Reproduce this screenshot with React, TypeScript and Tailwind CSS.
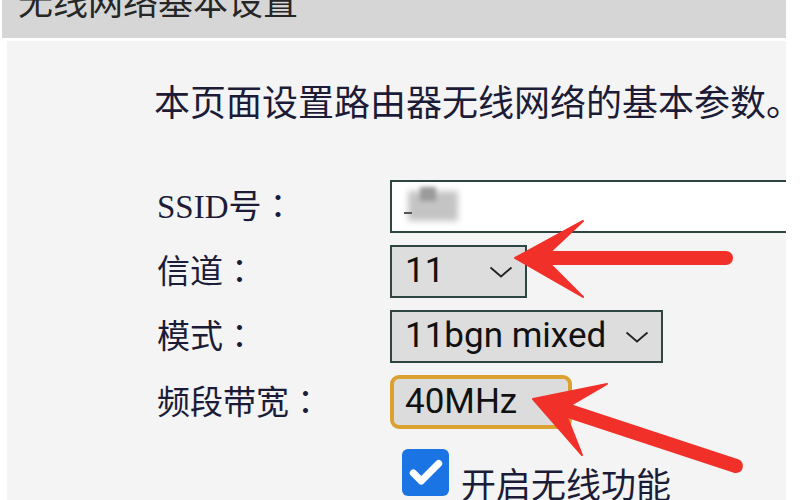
import { Check } from "lucide-react";

const rows = [
  { label: "信道", value: "11", width: "w-[137px]" },
  { label: "模式", value: "11bgn mixed", width: "w-[273px]" },
];

function Chevron() {
  return (
    <svg width="24" height="12" viewBox="0 0 24 12" className="shrink-0">
      <path d="M1.5 1.5 L12 10.5 L22.5 1.5" fill="none" stroke="#222" strokeWidth="1.8" />
    </svg>
  );
}

// full-width colon with centred dots, as in the screenshot
function Label({ text }: { text: string }) {
  return (
    <span className="w-[233px] shrink-0 whitespace-nowrap">
      {text}
      <span className="font-['Noto_Sans_CJK_TC',sans-serif]">：</span>
    </span>
  );
}

export default function App() {
  return (
    <div className="w-[800px] h-[500px] bg-white overflow-hidden relative">
      <div className="ml-[2px] w-[784px]">
        {/* title bar, cut at the top */}
        <div className="h-[38px] bg-[#d6d6d6] overflow-hidden px-[16px]">
          <div className="-mt-[18px] text-[35px] leading-[35px] text-[#262626] font-['Noto_Sans_CJK_SC',sans-serif]">
            无线网络基本设置
          </div>
        </div>

        <div className="ml-[5px] mt-[3px] h-[462px] bg-[#f4f4f4] overflow-hidden pl-[147px] pt-[41px] text-[#1c1c38]">
          <p className="text-[36px] leading-[36px] whitespace-nowrap font-['Noto_Sans_CJK_SC',sans-serif]">
            本页面设置路由器无线网络的基本参数。
          </p>

          <div className="mt-[62px] ml-[3px] flex flex-col gap-[12px] font-['Liberation_Serif','Noto_Sans_CJK_SC',serif] text-[33px]">
            <div className="flex items-center h-[53px]">
              <Label text="SSID号" />
              <div className="relative w-[420px] h-[53px] shrink-0 bg-white border-2 border-[#2d4642]">
                <div className="absolute left-[16px] top-[9px] w-[50px] h-[30px] bg-[#c4c4c4] blur-[3px]" />
                <div className="absolute left-[28px] top-[5px] w-[16px] h-[14px] bg-[#9a9a9a] blur-[2px]" />
                <div className="absolute left-[12px] top-[30px] w-[8px] h-[2px] bg-[#555]" />
              </div>
            </div>

            {rows.map((r) => (
              <div key={r.label} className="flex items-center h-[53px]">
                <Label text={r.label} />
                <div
                  className={`${r.width} h-[53px] shrink-0 bg-[#dddddd] border-2 border-[#2d4642] flex items-center justify-between pl-[13px] pr-[12px] font-['Roboto','Noto_Sans',sans-serif] text-[35px] text-[#111]`}
                >
                  <span>{r.value}</span>
                  <Chevron />
                </div>
              </div>
            ))}

            <div className="flex items-center h-[54px]">
              <Label text="频段带宽" />
              <div className="w-[182px] h-[54px] shrink-0 bg-[#dcdcdc] border-[4px] border-[#dba232] rounded-[9px] flex items-center pl-[11px] font-['Roboto','Noto_Sans',sans-serif] text-[35px] text-[#111]">
                40MHz
              </div>
            </div>

            <div className="flex items-start pl-[245px] pt-[8px]">
              <div className="w-[47px] h-[47px] rounded-[6px] bg-[#1b74e4] flex items-center justify-center">
                <Check size={38} strokeWidth={4.5} color="white" />
              </div>
              <span className="ml-[12px] mt-[14px] text-[35px] leading-[40px] font-['Noto_Sans_CJK_SC',sans-serif]">
                开启无线功能
              </span>
            </div>
          </div>
        </div>
      </div>

      {/* red annotation arrows */}
      <svg className="absolute inset-0 pointer-events-none" width="800" height="500" viewBox="0 0 800 500">
        <g fill="#f2302a" stroke="#f2302a" strokeLinejoin="round">
          <line x1="548" y1="258" x2="726" y2="258" strokeWidth="14" strokeLinecap="round" />
          <polygon points="515,258 583,221 550,252 550,264 583,297" strokeWidth="2" />
          <line x1="569" y1="411" x2="736" y2="466" strokeWidth="14" strokeLinecap="round" />
          <polygon points="533,399 607,384 571,405 567,417 582,455" strokeWidth="2" />
        </g>
      </svg>
    </div>
  );
}
